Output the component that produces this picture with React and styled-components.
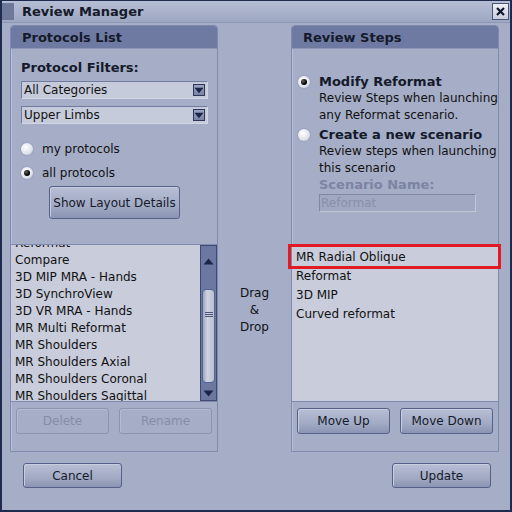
import React from 'react';
import styled, { createGlobalStyle, css } from 'styled-components';

const GlobalStyle = createGlobalStyle`
  html, body {
    margin: 0;
    padding: 0;
    background: #a5adc7;
  }
  body {
    font-family: "DejaVu Sans", "Liberation Sans", sans-serif;
    font-size: 12px;
    color: #111;
  }
`;

// Window frame
const Window = styled.div`
  width: 512px;
  height: 512px;
  box-sizing: border-box;
  border: 2px solid #1f2b4e;
  border-top: 1px solid #1f2b4e;
  background: #a5adc7;
  display: flex;
  flex-direction: column;
`;

const TitleBar = styled.div`
  height: 21px;
  display: flex;
  align-items: center;
  background: linear-gradient(#b6bed5, #9ea7c2);
  border-bottom: 1px solid #8d96b4;
`;

const Grip = styled.div`
  width: 12px;
  height: 17px;
  margin: 0 8px 0 0;
  background-image: radial-gradient(circle, #6f7899 0.8px, transparent 1px);
  background-size: 2px 2px;
`;

const Title = styled.div`
  flex: 1;
  font-weight: bold;
  font-size: 13px;
  color: #141a2a;
`;

const CloseButton = styled.div`
  width: 15px;
  height: 15px;
  margin-right: 1px;
  border: 1px solid #4a5478;
  background: linear-gradient(#eef0f6, #c8ccdc);
  display: flex;
  align-items: center;
  justify-content: center;
`;

const Body = styled.div`
  flex: 1;
  display: flex;
  flex-direction: column;
  padding: 2px 11px 0 8px;
`;

const Columns = styled.div`
  display: flex;
  height: 427px;
`;

const Panel = styled.div`
  width: 208px;
  box-sizing: border-box;
  border: 1px solid #7f8aad;
  border-radius: 4px 4px 0 0;
  display: flex;
  flex-direction: column;
  box-shadow: inset 1px 1px 0 #b9c0d6;
`;

const PanelHeader = styled.div`
  height: 22px;
  display: flex;
  align-items: center;
  padding-left: 11px;
  background: #6e7aa2;
  border-radius: 3px 3px 0 0;
  font-weight: bold;
  font-size: 13px;
  color: #141a2a;
  border-bottom: 1px solid #8c96b6;
`;

const Section = styled.div`
  height: 195px;
  box-sizing: border-box;
  display: flex;
  flex-direction: column;
  padding: ${(p) => p.$pad || '0'};
`;

const Label = styled.div`
  font-weight: bold;
  font-size: 13px;
  line-height: 16px;
  color: ${(p) => (p.$disabled ? '#7c84a3' : '#141a2a')};
`;

const Combo = styled.div`
  height: 18px;
  box-sizing: border-box;
  width: 187px;
  margin-top: ${(p) => p.$mt}px;
  display: flex;
  align-items: center;
  border: 1px solid #707b9f;
  border-right-color: #d2d6e3;
  border-bottom-color: #d2d6e3;
  background: #c6cbdb;
  padding-left: 2px;
  font-size: 12px;
`;

const ComboText = styled.span`
  flex: 1;
`;

const ComboArrow = styled.div`
  width: 12px;
  height: 12px;
  margin-right: 2px;
  box-sizing: border-box;
  border: 1px solid #2e3758;
  background: linear-gradient(#9aa3c0, #7a84a8);
  display: flex;
  align-items: center;
  justify-content: center;
`;

const RadioRow = styled.div`
  display: flex;
  align-items: ${(p) => (p.$top ? 'flex-start' : 'center')};
  height: ${(p) => (p.$h ? `${p.$h}px` : 'auto')};
  gap: 9px;
`;

const RadioDot = styled.div`
  width: 12px;
  height: 12px;
  flex: none;
  border-radius: 50%;
  background: radial-gradient(circle at 40% 35%, #ffffff, #dfe2ea 60%, #b8bdcf);
  box-shadow: 0 0 0 1px #9aa2bd;
  display: flex;
  align-items: center;
  justify-content: center;
  ${(p) =>
    p.$on &&
    css`
      &::after {
        content: '';
        width: 6px;
        height: 6px;
        border-radius: 50%;
        background: radial-gradient(circle at 35% 35%, #666, #000 60%);
      }
    `}
`;

const Button = styled.div`
  box-sizing: border-box;
  width: ${(p) => p.$w}px;
  height: ${(p) => p.$h || 26}px;
  display: flex;
  align-items: center;
  justify-content: center;
  border-radius: 3px;
  font-size: 12px;
  border: 1px solid ${(p) => (p.$disabled ? '#8b94b1' : '#56618a')};
  background: ${(p) =>
    p.$disabled ? '#a5adc7' : 'linear-gradient(#b7bed4, #a2aac4 60%, #8b94b3)'};
  color: ${(p) => (p.$disabled ? '#858ea9' : '#141a2a')};
  box-shadow: ${(p) => (p.$disabled ? 'inset 1px 1px 0 #b5bcd2' : 'inset 1px 1px 0 #c8cee0')};
`;

const ListBox = styled.div`
  height: 158px;
  box-sizing: border-box;
  border-top: 1px solid #7f8aad;
  border-bottom: 1px solid #7f8aad;
  background: #c8ccdb;
  display: flex;
  overflow: ${(p) => (p.$clip ? 'hidden' : 'visible')};
`;

const ListItems = styled.div`
  flex: 1;
  overflow: ${(p) => (p.$clip ? 'hidden' : 'visible')};
  padding: ${(p) => p.$pad};
`;

const Item = styled.div`
  height: ${(p) => p.$h}px;
  line-height: ${(p) => p.$h}px;
  padding-left: 4px;
  white-space: nowrap;
  position: relative;
  ${(p) =>
    p.$marked &&
    css`
      &::after {
        content: '';
        position: absolute;
        left: -4px;
        right: -3px;
        top: -4px;
        bottom: -2px;
        border: 3px solid #e01b24;
      }
    `}
`;

const ScrollBar = styled.div`
  width: 17px;
  box-sizing: border-box;
  background: #6c78a2;
  border: 1px solid #3f4a72;
  display: flex;
  flex-direction: column;
  align-items: center;
`;

const Thumb = styled.div`
  width: 13px;
  height: 96px;
  margin-top: 21px;
  border-radius: 4px;
  background: linear-gradient(90deg, #9ea6c1, #cfd3e0 40%, #b9bfd3);
  border: 1px solid #59648b;
  box-sizing: border-box;
  display: flex;
  align-items: flex-end;
  justify-content: center;
  padding-bottom: 64px;
`;

const ButtonRow = styled.div`
  display: flex;
  justify-content: space-between;
  padding: 6px 5px 0 5px;
`;

const Middle = styled.div`
  flex: 1;
  display: flex;
  flex-direction: column;
  align-items: center;
  text-align: center;
  line-height: 17px;
  padding-top: 260px;
`;

const Desc = styled.div`
  line-height: 17px;
`;

const TextField = styled.div`
  width: 157px;
  height: 18px;
  box-sizing: border-box;
  margin-top: 1px;
  border: 1px solid #7d87a8;
  border-right-color: #c2c7d8;
  border-bottom-color: #c2c7d8;
  background: #a0a8c2;
  color: #8890ab;
  padding-left: 1px;
  line-height: 16px;
`;

const Footer = styled.div`
  display: flex;
  justify-content: space-between;
  padding: 11px 8px 0 13px;
`;

const Arrow = ({ up }) => (
  <svg width="11" height="7" viewBox="0 0 11 7">
    <path d={up ? 'M0.5 6.5 L5.5 0.5 L10.5 6.5 Z' : 'M0.5 0.5 L5.5 6.5 L10.5 0.5 Z'} fill="#1c2547" />
  </svg>
);

const protocols = [
  'Reformat',
  'Compare',
  '3D MIP MRA - Hands',
  '3D SynchroView',
  '3D VR MRA - Hands',
  'MR Multi Reformat',
  'MR Shoulders',
  'MR Shoulders Axial',
  'MR Shoulders Coronal',
  'MR Shoulders Sagittal',
];

const steps = ['MR Radial Oblique', 'Reformat', '3D MIP', 'Curved reformat'];

const App = () => (
  <>
    <GlobalStyle />
    <Window>
      <TitleBar>
        <Grip />
        <Title>Review Manager</Title>
        <CloseButton>
          <svg width="11" height="11" viewBox="0 0 11 11">
            <path d="M2 2 L9 9 M9 2 L2 9" stroke="#10182e" strokeWidth="2.2" />
          </svg>
        </CloseButton>
      </TitleBar>
      <Body>
        <Columns>
          <Panel>
            <PanelHeader>Protocols List</PanelHeader>
            <Section $pad="11px 0 0 10px">
              <Label>Protocol Filters:</Label>
              <Combo $mt={5}>
                <ComboText>All Categories</ComboText>
                <ComboArrow><Arrow /></ComboArrow>
              </Combo>
              <Combo $mt={7}>
                <ComboText>Upper Limbs</ComboText>
                <ComboArrow><Arrow /></ComboArrow>
              </Combo>
              <div style={{ height: 13 }} />
              <RadioRow $h={24}>
                <RadioDot />
                <span>my protocols</span>
              </RadioRow>
              <RadioRow $h={24}>
                <RadioDot $on />
                <span>all protocols</span>
              </RadioRow>
              <Button $w={131} $h={33} style={{ marginLeft: 28, marginTop: 1 }}>
                Show Layout Details
              </Button>
            </Section>
            <ListBox $clip>
              <ListItems $clip $pad="0">
                <div style={{ marginTop: -10 }}>
                  {protocols.map((p) => (
                    <Item key={p} $h={17}>{p}</Item>
                  ))}
                </div>
              </ListItems>
              <ScrollBar>
                <div style={{ marginTop: 8 }}><Arrow up /></div>
                <Thumb>
                  <svg width="8" height="6" viewBox="0 0 8 6">
                    <path d="M0 0.5 H8 M0 2.5 H8 M0 4.5 H8" stroke="#4a5478" strokeWidth="1" />
                  </svg>
                </Thumb>
                <div style={{ marginTop: 3 }}><Arrow /></div>
              </ScrollBar>
            </ListBox>
            <ButtonRow>
              <Button $w={93} $disabled>Delete</Button>
              <Button $w={93} $disabled>Rename</Button>
            </ButtonRow>
          </Panel>
          <Middle>
            <span>Drag</span>
            <span>&amp;</span>
            <span>Drop</span>
          </Middle>
          <Panel>
            <PanelHeader>Review Steps</PanelHeader>
            <Section $pad="25px 0 0 6px">
              <RadioRow $top>
                <RadioDot $on style={{ marginTop: 2 }} />
                <div>
                  <Label>Modify Reformat</Label>
                  <Desc>Review Steps when launching</Desc>
                  <Desc>any Reformat scenario.</Desc>
                </div>
              </RadioRow>
              <RadioRow $top style={{ marginTop: 3 }}>
                <RadioDot style={{ marginTop: 2 }} />
                <div>
                  <Label>Create a new scenario</Label>
                  <Desc>Review steps when launching</Desc>
                  <Desc>this scenario</Desc>
                  <Label $disabled>Scenario Name:</Label>
                  <TextField>Reformat</TextField>
                </div>
              </RadioRow>
            </Section>
            <ListBox>
              <ListItems $pad="3px 0 0 0">
                {steps.map((s, i) => (
                  <Item key={s} $h={19} $marked={i === 0}>{s}</Item>
                ))}
              </ListItems>
            </ListBox>
            <ButtonRow>
              <Button $w={93}>Move Up</Button>
              <Button $w={93}>Move Down</Button>
            </ButtonRow>
          </Panel>
        </Columns>
        <Footer>
          <Button $w={99} $h={25}>Cancel</Button>
          <Button $w={99} $h={25}>Update</Button>
        </Footer>
      </Body>
    </Window>
  </>
);

export default App;
